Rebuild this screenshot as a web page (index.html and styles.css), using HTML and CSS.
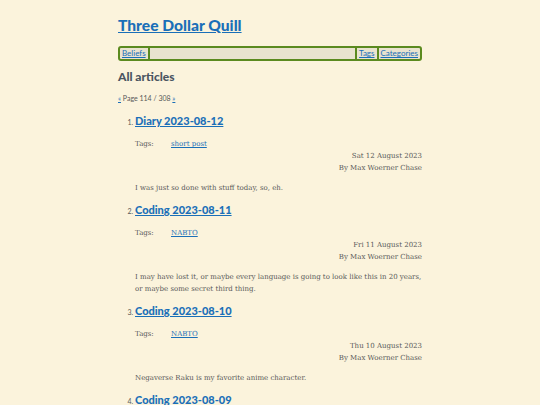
FILE: index.html
```html
<!DOCTYPE html>
<html>
<head>
<meta charset="utf-8">
<link rel="stylesheet" href="styles.css">
</head>
<body>
<div class="page">
  <h1 class="site-title"><a href="#">Three Dollar Quill</a></h1>
  <nav class="nav">
    <a href="#" class="nav-link">Beliefs</a>
    <span class="nav-fill"></span>
    <a href="#" class="nav-link">Tags</a>
    <a href="#" class="nav-link">Categories</a>
  </nav>
  <h2 class="section-title">All articles</h2>
  <p class="pager"><a href="#">«</a> Page 114 / 308 <a href="#">»</a></p>
  <ol class="articles">
    <li class="article">
      <h3 class="article-title"><a href="#">Diary 2023-08-12</a></h3>
      <div class="tags"><span class="tags-label">Tags:</span><a href="#">short post</a></div>
      <div class="meta"><div>Sat 12 August 2023</div><div>By Max Woerner Chase</div></div>
      <p class="summary">I was just so done with stuff today, so, eh.</p>
    </li>
    <li class="article">
      <h3 class="article-title"><a href="#">Coding 2023-08-11</a></h3>
      <div class="tags"><span class="tags-label">Tags:</span><a href="#">NABTO</a></div>
      <div class="meta"><div>Fri 11 August 2023</div><div>By Max Woerner Chase</div></div>
      <p class="summary">I may have lost it, or maybe every language is going to look like this in 20 years, or maybe some secret third thing.</p>
    </li>
    <li class="article">
      <h3 class="article-title"><a href="#">Coding 2023-08-10</a></h3>
      <div class="tags"><span class="tags-label">Tags:</span><a href="#">NABTO</a></div>
      <div class="meta"><div>Thu 10 August 2023</div><div>By Max Woerner Chase</div></div>
      <p class="summary">Negaverse Raku is my favorite anime character.</p>
    </li>
    <li class="article">
      <h3 class="article-title"><a href="#">Coding 2023-08-09</a></h3>
    </li>
  </ol>
</div>
</body>
</html>
```
FILE: styles.css
```css
html, body {
  margin: 0;
  padding: 0;
  background: #fbf3dc;
}
body {
  font-family: "DejaVu Serif", serif;
  color: #595959;
  font-size: 7px;
}
a { color: #1a6fb8; }
.page {
  width: 304px;
  margin: 0 auto;
  padding-top: 14px;
}
.site-title {
  font-family: Lato, sans-serif;
  font-size: 15.6px;
  font-weight: 900;
  margin: 0 0 10px 0;
  line-height: 22px;
}
.nav {
  display: flex;
  align-items: stretch;
  border: 2px solid #5b8a1f;
  border-radius: 3px;
  background: #e9e3cf;
  font-family: Lato, sans-serif;
  font-size: 8px;
  line-height: 11px;
}
.nav-link {
  padding: 0 2px;
  border-left: 2px solid #5b8a1f;
}
.nav-link:first-child { border-left: 0; border-right: 2px solid #5b8a1f; }
.nav-fill { flex: 1; }
.section-title {
  font-family: Lato, sans-serif;
  font-size: 12px;
  font-weight: 900;
  color: #4a5561;
  margin: 8px 0 10px 0;
}
.pager {
  font-family: Lato, sans-serif;
  font-size: 7px;
  margin: 0 0 12px 0;
}
.articles {
  margin: 0;
  padding-left: 17px;
}
.article::marker {
  font-family: Lato, sans-serif;
  font-size: 7px;
}
.article-title {
  font-family: Lato, sans-serif;
  font-size: 11px;
  font-weight: 900;
  margin: 0 0 13px 0;
}
.tags {
  display: flex;
  margin-bottom: 2px;
}
.tags-label { width: 36px; }
.meta {
  text-align: right;
  line-height: 12px;
}
.summary {
  margin: 8px 0 9px 0;
  line-height: 12px;
}
```
